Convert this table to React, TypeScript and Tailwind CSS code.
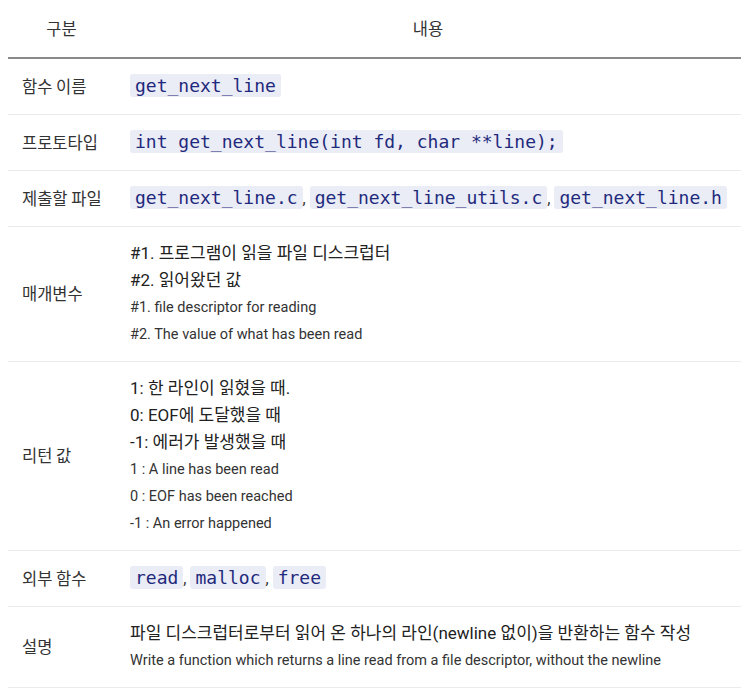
import React from "react";

const FONT = "font-['Roboto','Noto_Sans_CJK_KR',sans-serif]";
const LABEL_FONT = "font-['Noto_Sans_CJK_KR',sans-serif]";

const Code: React.FC<{ children: React.ReactNode }> = ({ children }) => (
  <code className="rounded-[3px] bg-[#eaecf6] px-[5px] py-[1px] font-['DejaVu_Sans_Mono',monospace] text-[18px] text-[#1f2a7c]">
    {children}
  </code>
);

const CodeList: React.FC<{ items: string[] }> = ({ items }) => (
  <span>
    {items.map((item, index) => (
      <React.Fragment key={item}>
        {index > 0 && <span className="text-[#333]">, </span>}
        <Code>{item}</Code>
      </React.Fragment>
    ))}
  </span>
);

const Big: React.FC<{ children: React.ReactNode }> = ({ children }) => (
  <p className="text-[17px] leading-[27px] text-[#222]">{children}</p>
);

const Small: React.FC<{ children: React.ReactNode }> = ({ children }) => (
  <p className="text-[14.5px] leading-[27px] text-[#333]">{children}</p>
);

interface Row {
  label: string;
  code?: boolean;
  content: React.ReactNode;
}

const ROWS: Row[] = [
  { label: "함수 이름", code: true, content: <Code>get_next_line</Code> },
  {
    label: "프로토타입",
    code: true,
    content: <Code>int get_next_line(int fd, char **line);</Code>,
  },
  {
    label: "제출할 파일",
    code: true,
    content: (
      <CodeList
        items={["get_next_line.c", "get_next_line_utils.c", "get_next_line.h"]}
      />
    ),
  },
  {
    label: "매개변수",
    content: (
      <>
        <Big>#1. 프로그램이 읽을 파일 디스크럽터</Big>
        <Big>#2. 읽어왔던 값</Big>
        <Small>#1. file descriptor for reading</Small>
        <Small>#2. The value of what has been read</Small>
      </>
    ),
  },
  {
    label: "리턴 값",
    content: (
      <>
        <Big>1: 한 라인이 읽혔을 때.</Big>
        <Big>0: EOF에 도달했을 때</Big>
        <Big>-1: 에러가 발생했을 때</Big>
        <Small>1 : A line has been read</Small>
        <Small>0 : EOF has been reached</Small>
        <Small>-1 : An error happened</Small>
      </>
    ),
  },
  {
    label: "외부 함수",
    code: true,
    content: <CodeList items={["read", "malloc", "free"]} />,
  },
  {
    label: "설명",
    content: (
      <>
        <Big>파일 디스크럽터로부터 읽어 온 하나의 라인(newline 없이)을 반환하는 함수 작성</Big>
        <Small>
          Write a function which returns a line read from a file descriptor,
          without the newline
        </Small>
      </>
    ),
  },
];

export default function App() {
  return (
    <div className={`min-h-[699px] bg-white px-[8px] ${FONT}`}>
      <table className="w-[733px] border-collapse">
        <thead>
          <tr className="border-b-2 border-[#8a8a8a]">
            <th
              className={`h-[58px] w-[107px] text-center text-[16.5px] font-normal text-[#333] ${LABEL_FONT}`}
            >
              구분
            </th>
            <th
              className={`h-[58px] text-center text-[16.5px] font-normal text-[#333] ${LABEL_FONT}`}
            >
              내용
            </th>
          </tr>
        </thead>
        <tbody>
          {ROWS.map((row) => (
            <tr key={row.label} className="border-b border-[#ebebeb]">
              <td
                className={`pl-[14px] align-middle text-[16.5px] text-[#333] ${LABEL_FONT}`}
              >
                {row.label}
              </td>
              <td
                className={
                  row.code
                    ? "h-[56px] pl-[15px] align-middle leading-[27px]"
                    : "py-[13px] pl-[15px] align-middle"
                }
              >
                {row.content}
              </td>
            </tr>
          ))}
        </tbody>
      </table>
    </div>
  );
}
